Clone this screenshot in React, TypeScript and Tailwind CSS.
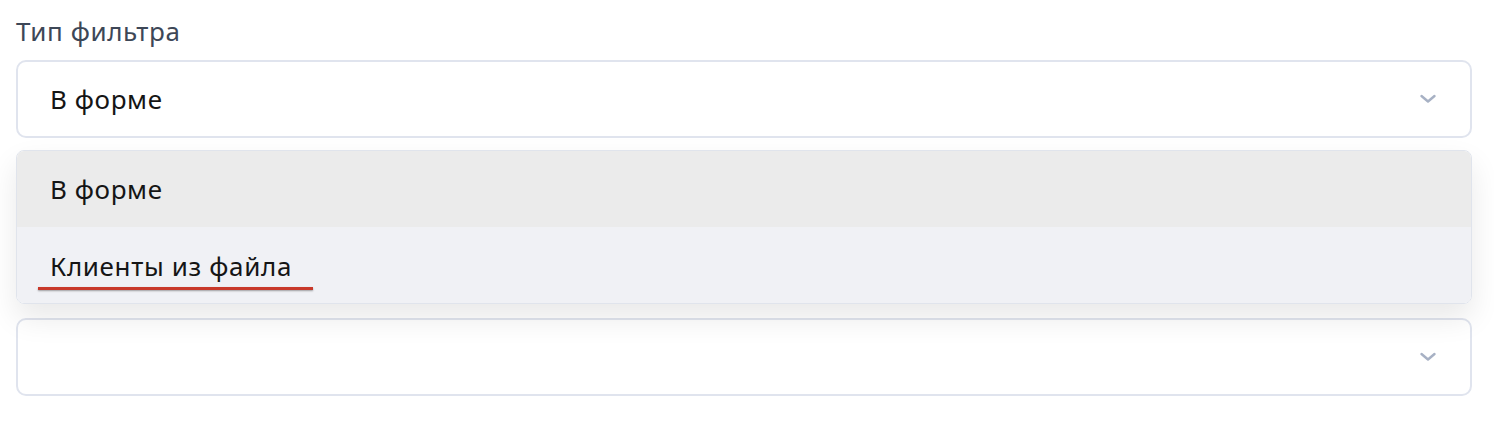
import React from "react";

const Chevron = () => (
  <svg width="18" height="10" viewBox="0 0 18 10" className="shrink-0">
    <path d="M2.5 2 L9 7.5 L15.5 2" fill="none" stroke="#a7b1c4" strokeWidth="2.4" strokeLinecap="round" strokeLinejoin="round" />
  </svg>
);

export default function App() {
  return (
    <div className="w-[1494px] h-[424px] bg-white pl-4 pr-[22px] pt-[14px]" style={{ fontFamily: '"Noto Sans", Lato, sans-serif' }}>
      <div className="text-[26px] leading-[34px] tracking-[0.6px] text-[#3d4757]">Тип фильтра</div>
      <div className="mt-[12px] h-[78px] rounded-[10px] border-2 border-[#e0e4ee] flex items-center justify-between pl-[32px] pr-[33px]">
        <span className="text-[26px] leading-[34px] tracking-[0.6px] text-[#151515]">В форме</span>
        <Chevron />
      </div>
      <div className="relative mt-[12px] h-[154px]">
        <div className="absolute inset-0 z-10 rounded-[8px] border border-[#e0e4ec] overflow-hidden shadow-[0_14px_30px_rgba(0,0,0,0.09)]">
          <div className="h-[76px] bg-[#ebebeb] flex items-center pl-[33px] text-[26px] leading-[34px] tracking-[0.6px] text-[#151515]">В форме</div>
          <div className="h-[77px] bg-[#f0f1f5] flex items-center pl-[33px] text-[26px] leading-[34px] tracking-[0.65px] text-[#151515]">
            <span className="relative block">
              Клиенты из файла
              <span className="absolute left-[-12px] right-[-21px] bottom-[-7px] h-[3px] bg-[#c8392a] shadow-[0_1px_2px_rgba(0,0,0,0.35)]" />
            </span>
          </div>
        </div>
      </div>
      <div className="mt-[14px] h-[78px] rounded-[10px] border-2 border-[#e0e4ee] flex items-center justify-end pr-[33px]">
        <Chevron />
      </div>
    </div>
  );
}
